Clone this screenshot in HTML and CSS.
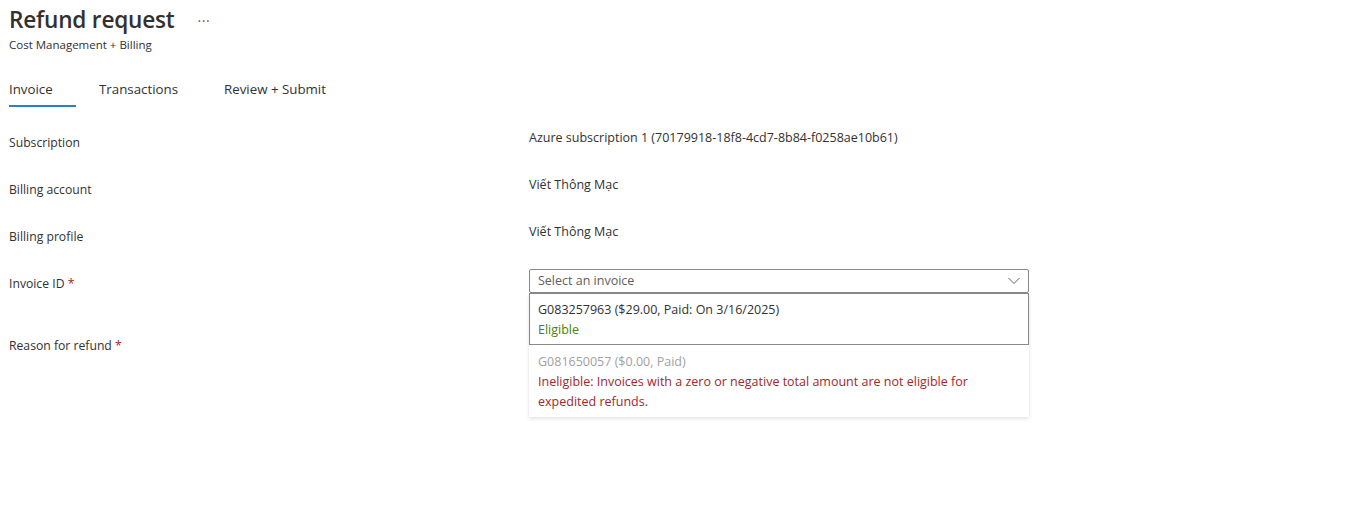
FILE: index.html
```html
<!DOCTYPE html>
<html lang="en">
<head>
<meta charset="utf-8">
<title>Refund request</title>
<link rel="stylesheet" href="styles.css">
</head>
<body>
<div class="page">
  <header class="header">
    <div class="title-row">
      <h1 class="title">Refund request</h1>
      <span class="more">···</span>
    </div>
    <div class="subtitle">Cost Management + Billing</div>
  </header>

  <nav class="tabs">
    <div class="tab active">Invoice</div>
    <div class="tab">Transactions</div>
    <div class="tab">Review + Submit</div>
  </nav>

  <div class="form">
    <div class="row">
      <div class="label">Subscription</div>
      <div class="value">Azure subscription 1 (70179918-18f8-4cd7-8b84-f0258ae10b61)</div>
    </div>
    <div class="row">
      <div class="label">Billing account</div>
      <div class="value">Viết Thông Mạc</div>
    </div>
    <div class="row">
      <div class="label">Billing profile</div>
      <div class="value">Viết Thông Mạc</div>
    </div>
    <div class="row row-select">
      <div class="label">Invoice ID <span class="req">*</span></div>
      <div class="field">
        <div class="dropdown">
          <span class="placeholder">Select an invoice</span>
          <svg class="chev" width="12" height="8" viewBox="0 0 12 8"><path d="M0.5 1 L6 6.5 L11.5 1" fill="none" stroke="#605e5c" stroke-width="1"/></svg>
        </div>
        <div class="menu">
          <div class="option selected">
            <div class="opt-title">G083257963 ($29.00, Paid: On 3/16/2025)</div>
            <div class="opt-eligible">Eligible</div>
          </div>
          <div class="option disabled">
            <div class="opt-title">G081650057 ($0.00, Paid)</div>
            <div class="opt-ineligible">Ineligible: Invoices with a zero or negative total amount are not eligible for expedited refunds.</div>
          </div>
        </div>
      </div>
    </div>
    <div class="row row-reason">
      <div class="label">Reason for refund <span class="req">*</span></div>
      <div class="value"></div>
    </div>
  </div>
</div>
</body>
</html>
```
FILE: styles.css
```css
* { box-sizing: border-box; }
html, body {
  margin: 0;
  padding: 0;
  background: #ffffff;
}
body {
  font-family: "Open Sans", "Noto Sans", "Liberation Sans", sans-serif;
  color: #323130;
  font-size: 13px;
}
.page {
  padding: 0 0 0 9px;
  min-height: 505px;
}
.header {
  padding-top: 4px;
}
.title-row {
  display: flex;
  align-items: center;
  height: 32px;
}
.title {
  margin: 0;
  font-size: 22.6px;
  font-weight: 600;
  line-height: 32px;
  color: #323130;
  letter-spacing: -0.2px;
}
.more {
  margin-left: 23px;
  font-size: 14px;
  color: #605e5c;
  letter-spacing: 0.5px;
}
.subtitle {
  font-size: 11.5px;
  line-height: 16px;
  color: #323130;
  margin-top: 1px;
}
.tabs {
  display: flex;
  margin-top: 26px;
  height: 34px;
}
.tab {
  font-size: 13.3px;
  line-height: 20px;
  height: 34px;
  position: relative;
  color: #323130;
}
.tab:nth-child(1) { width: 90px; }
.tab:nth-child(2) { width: 125px; }
.tab.active::after {
  content: "";
  position: absolute;
  left: 0;
  width: 67px;
  top: 26px;
  height: 2px;
  background: #2b7cd3;
}
.form {
  margin-top: -2px;
}
.row {
  display: grid;
  grid-template-columns: 520px 500px;
  height: 47px;
  align-items: start;
}
.label {
  font-size: 12.2px;
  line-height: 20px;
  padding-top: 22px;
}
.value {
  font-size: 12.5px;
  line-height: 20px;
  padding-top: 17px;
}
.row-select {
  height: 62px;
}
.req {
  color: #a4262c;
}
.field {
  position: relative;
  padding-top: 17px;
}
.dropdown {
  height: 24px;
  border: 1px solid #8a8886;
  border-radius: 2px;
  display: flex;
  align-items: center;
  justify-content: space-between;
  padding: 0 8px 0 8px;
}
.placeholder {
  font-size: 12.5px;
  color: #605e5c;
  line-height: 20px;
}
.chev {
  display: block;
}
.menu {
  position: absolute;
  left: 0;
  top: 41px;
  width: 500px;
  background: #ffffff;
  box-shadow: 0 1.6px 3.6px rgba(0,0,0,0.13), 0 0.3px 0.9px rgba(0,0,0,0.11);
  z-index: 2;
}
.option {
  font-size: 12.5px;
  line-height: 20px;
}
.option.selected {
  height: 52px;
  border: 1px solid #8a8886;
  padding: 6px 8px 0 8px;
}
.option.disabled {
  height: 72px;
  padding: 7px 9px 0 9px;
}
.opt-title { color: #323130; }
.disabled .opt-title { color: #a19f9d; }
.opt-eligible { color: #498205; }
.opt-ineligible { color: #a4262c; }
.row-reason .label { padding-top: 22px; }
```
